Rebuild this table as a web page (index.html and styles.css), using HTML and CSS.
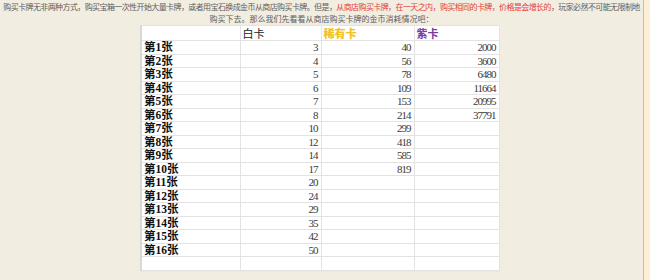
FILE: index.html
```html
<!DOCTYPE html>
<html lang="zh-CN">
<head>
<meta charset="utf-8">
<title>卡牌金币消耗</title>
<link rel="stylesheet" href="styles.css">
</head>
<body>
<div class="page">
  <div class="content">
    <p class="intro">
      <span class="line1">购买卡牌无非两种方式，购买宝箱一次性开始大量卡牌，或者用宝石换成金币从商店购买卡牌。但是，<span class="red">从商店购买卡牌，在一天之内，购买相同的卡牌，价格是会增长的</span>，玩家必然不可能无限制地</span><br>
      <span class="line2">购买下去。那么我们先看看从商店购买卡牌的金币消耗情况吧：</span>
    </p>
    <div class="frame">
      <table class="cost">
        <colgroup>
          <col class="c1"><col class="c2"><col class="c3"><col class="c4">
        </colgroup>
        <thead>
          <tr><th></th><th class="white">白卡</th><th class="rare">稀有卡</th><th class="purple">紫卡</th></tr>
        </thead>
        <tbody>
          <tr><td class="lbl">第1张</td><td>3</td><td>40</td><td>2000</td></tr>
          <tr><td class="lbl">第2张</td><td>4</td><td>56</td><td>3600</td></tr>
          <tr><td class="lbl">第3张</td><td>5</td><td>78</td><td>6480</td></tr>
          <tr><td class="lbl">第4张</td><td>6</td><td>109</td><td>11664</td></tr>
          <tr><td class="lbl">第5张</td><td>7</td><td>153</td><td>20995</td></tr>
          <tr><td class="lbl">第6张</td><td>8</td><td>214</td><td>37791</td></tr>
          <tr><td class="lbl">第7张</td><td>10</td><td>299</td><td></td></tr>
          <tr><td class="lbl">第8张</td><td>12</td><td>418</td><td></td></tr>
          <tr><td class="lbl">第9张</td><td>14</td><td>585</td><td></td></tr>
          <tr><td class="lbl">第10张</td><td>17</td><td>819</td><td></td></tr>
          <tr><td class="lbl">第11张</td><td>20</td><td></td><td></td></tr>
          <tr><td class="lbl">第12张</td><td>24</td><td></td><td></td></tr>
          <tr><td class="lbl">第13张</td><td>29</td><td></td><td></td></tr>
          <tr><td class="lbl">第14张</td><td>35</td><td></td><td></td></tr>
          <tr><td class="lbl">第15张</td><td>42</td><td></td><td></td></tr>
          <tr><td class="lbl">第16张</td><td>50</td><td></td><td></td></tr>
          <tr><td class="lbl"></td><td></td><td></td><td></td></tr>
        </tbody>
      </table>
    </div>
  </div>
  <div class="edge"></div>
</div>
</body>
</html>
```
FILE: styles.css
```css
html, body {
  margin: 0;
  padding: 0;
}
body {
  background: #f2ede1;
  font-family: "Noto Sans CJK SC", "Liberation Sans", sans-serif;
  color: #555;
  width: 650px;
  height: 280px;
  overflow: hidden;
}
.page {
  display: flex;
  height: 280px;
}
.content {
  width: 643px;
  flex: none;
}
.edge {
  flex: 1;
  border-left: 1px solid #c9bea6;
  background: #fcefd5;
}
.intro {
  margin: 0;
  padding-top: 1px;
  font-size: 8px;
  line-height: 12px;
  text-align: center;
  color: #5e5e5e;
  white-space: nowrap;
}
.line1 {
  letter-spacing: -0.6px;
}
.red {
  color: #e5403a;
}
.frame {
  margin-left: 140px;
  width: 358px;
  background: #fff;
  border-right: 2px solid #e4e4e4;
  border-bottom: 1px solid #e8e8e8;
}
.cost {
  border-collapse: collapse;
  table-layout: fixed;
  width: 358px;
  background: #fff;
  border: 1px solid #d6d6d6;
  border-left: 2px solid #d8d8d8;
}
.c1 { width: 99px; }
.c2 { width: 81px; }
.c3 { width: 93px; }
.c4 { width: 85px; }
.cost th, .cost td {
  border: 1px solid #e3e3e3;
  padding: 0 2px;
  overflow: hidden;
  white-space: nowrap;
}
.cost th {
  height: 14px;
  font-family: "Noto Sans CJK SC", sans-serif;
  font-weight: normal;
  font-size: 11px;
  line-height: 14px;
  text-align: left;
  color: #222;
}
.cost th.rare {
  color: #f0c22a;
  font-weight: bold;
  text-shadow: 0 0 1px #f7d866;
}
.cost th.purple {
  color: #7a3c9c;
  font-weight: bold;
}
.cost td {
  height: 12.5px;
  font-family: "Liberation Serif", serif;
  font-size: 11px;
  line-height: 12.5px;
  letter-spacing: -1px;
  text-align: right;
  color: #3a3a3a;
  padding-right: 3px;
}
.cost td.lbl {
  font-family: "Liberation Serif", "Noto Sans CJK SC", serif;
  font-size: 11.5px;
  font-weight: bold;
  text-align: left;
  color: #111;
  letter-spacing: 0;
  padding-left: 2px;
}
```
